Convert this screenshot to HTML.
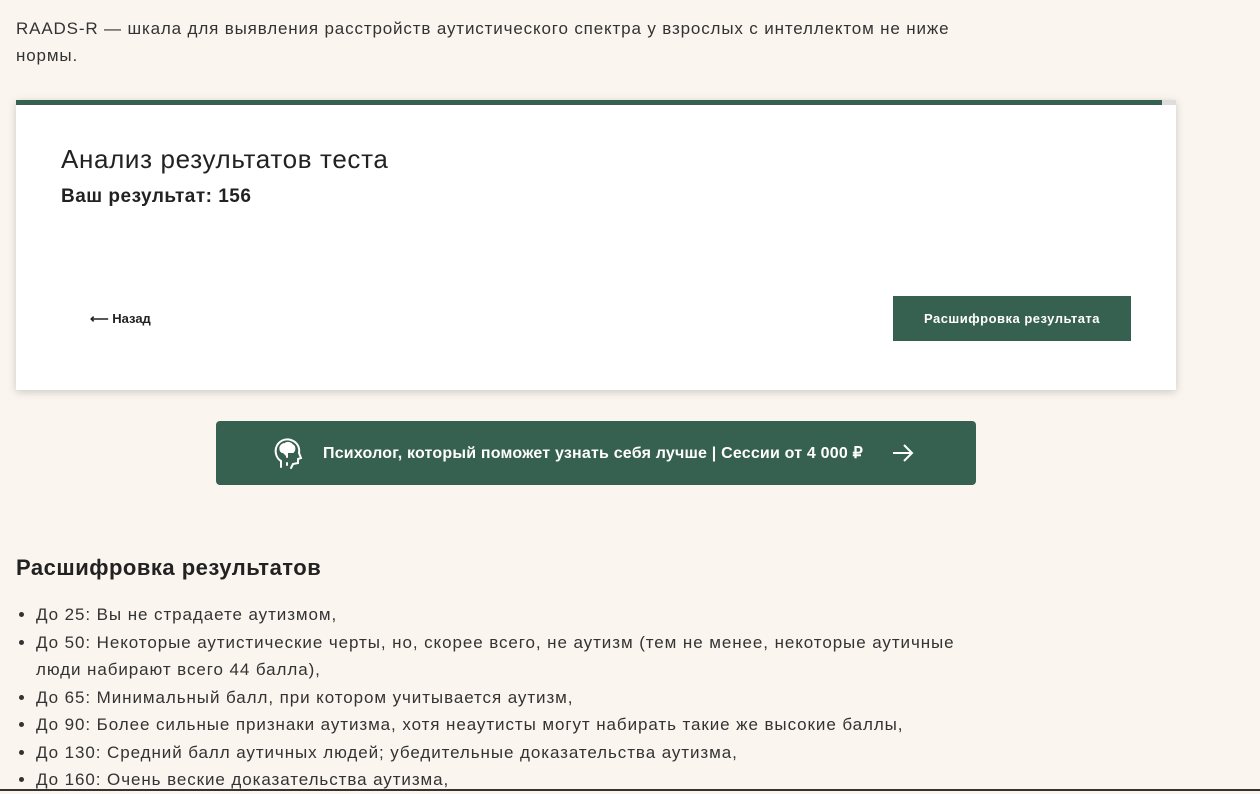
<!DOCTYPE html>
<html><head><meta charset="utf-8"><style>
body{margin:0;background:#faf5ef;font-family:"Liberation Sans","Noto Sans CJK SC",sans-serif;color:#222;width:1260px;height:791px;overflow:hidden;position:relative}
.intro{position:absolute;left:16px;top:15px;width:960px;font-size:17px;line-height:27px;color:#333;letter-spacing:0.85px}
.card{position:absolute;left:16px;top:100px;width:1160px;height:290px;background:#fff;box-shadow:0 2px 8px rgba(0,0,0,.18)}
.bar{position:absolute;left:0;top:0;width:1146px;height:5px;background:#36604f}
.bar2{position:absolute;left:1146px;top:0;width:14px;height:5px;background:#ddd}
h2{position:absolute;left:45px;top:44px;margin:0;font-weight:normal;font-size:26px;color:#222;letter-spacing:0.65px}
.res{position:absolute;left:45px;top:86px;font-weight:bold;font-size:19px;color:#222;letter-spacing:0.5px}
.back{position:absolute;left:74px;top:211px;font-size:13px;font-weight:bold}
.btn{position:absolute;left:877px;top:196px;width:238px;height:45px;background:#36604f;color:#fff;font-size:13px;font-weight:bold;text-align:center;line-height:45px;letter-spacing:0.5px}
.banner{position:absolute;left:216px;top:421px;width:760px;height:64px;background:#36604f;border-radius:4px;color:#fff;font-weight:bold;font-size:16px}
.banner span{position:absolute;left:107px;top:22px;letter-spacing:0.2px}
h3{position:absolute;left:16px;top:555px;margin:0;font-size:22px;font-weight:bold;color:#222;letter-spacing:0.5px}
ul{position:absolute;left:16px;top:601px;margin:0;padding-left:20px;width:945px;font-size:17px;line-height:27.5px;color:#333;letter-spacing:0.92px}
.line{position:absolute;left:0;right:0;top:789px;height:2px;background:#333}
</style></head><body>
<div class="intro">RAADS-R — шкала для выявления расстройств аутистического спектра у взрослых с интеллектом не ниже нормы.</div>
<div class="card"><div class="bar"></div><div class="bar2"></div>
<h2>Анализ результатов теста</h2>
<div class="res">Ваш результат: 156</div>
<div class="back">⟵ Назад</div>
<div class="btn">Расшифровка результата</div>
</div>
<div class="banner">
<svg style="position:absolute;left:57px;top:16px" width="30" height="34" viewBox="0 0 30 34" fill="none" stroke="#fff" stroke-width="2" stroke-linecap="round"><path d="M8 30 V24 C3 21 2 15 3 11 C5 4 12 1 18 3 C24 5 27 10 26 16 L28 21 L25 22 V26 L20 27 L18 31"/><path d="M8 14 C6 10 9 7 12 7 C14 5 18 6 19 8 C22 9 22 13 20 15 L14 15 V20 M9 15 L12 15" fill="#fff"/><path d="M14 26 V28"/></svg>
<span>Психолог, который поможет узнать себя лучше | Сессии от 4 000 ₽</span>
<svg style="position:absolute;left:676px;top:22px" width="22" height="20" viewBox="0 0 22 20" fill="none" stroke="#fff" stroke-width="2"><path d="M1 10H20M12 2l8 8-8 8"/></svg>
</div>
<h3>Расшифровка результатов</h3>
<ul>
<li>До 25: Вы не страдаете аутизмом,</li>
<li>До 50: Некоторые аутистические черты, но, скорее всего, не аутизм (тем не менее, некоторые аутичные люди набирают всего 44 балла),</li>
<li>До 65: Минимальный балл, при котором учитывается аутизм,</li>
<li>До 90: Более сильные признаки аутизма, хотя неаутисты могут набирать такие же высокие баллы,</li>
<li>До 130: Средний балл аутичных людей; убедительные доказательства аутизма,</li>
<li>До 160: Очень веские доказательства аутизма,</li>
</ul>
<div class="line"></div>
</body></html>
